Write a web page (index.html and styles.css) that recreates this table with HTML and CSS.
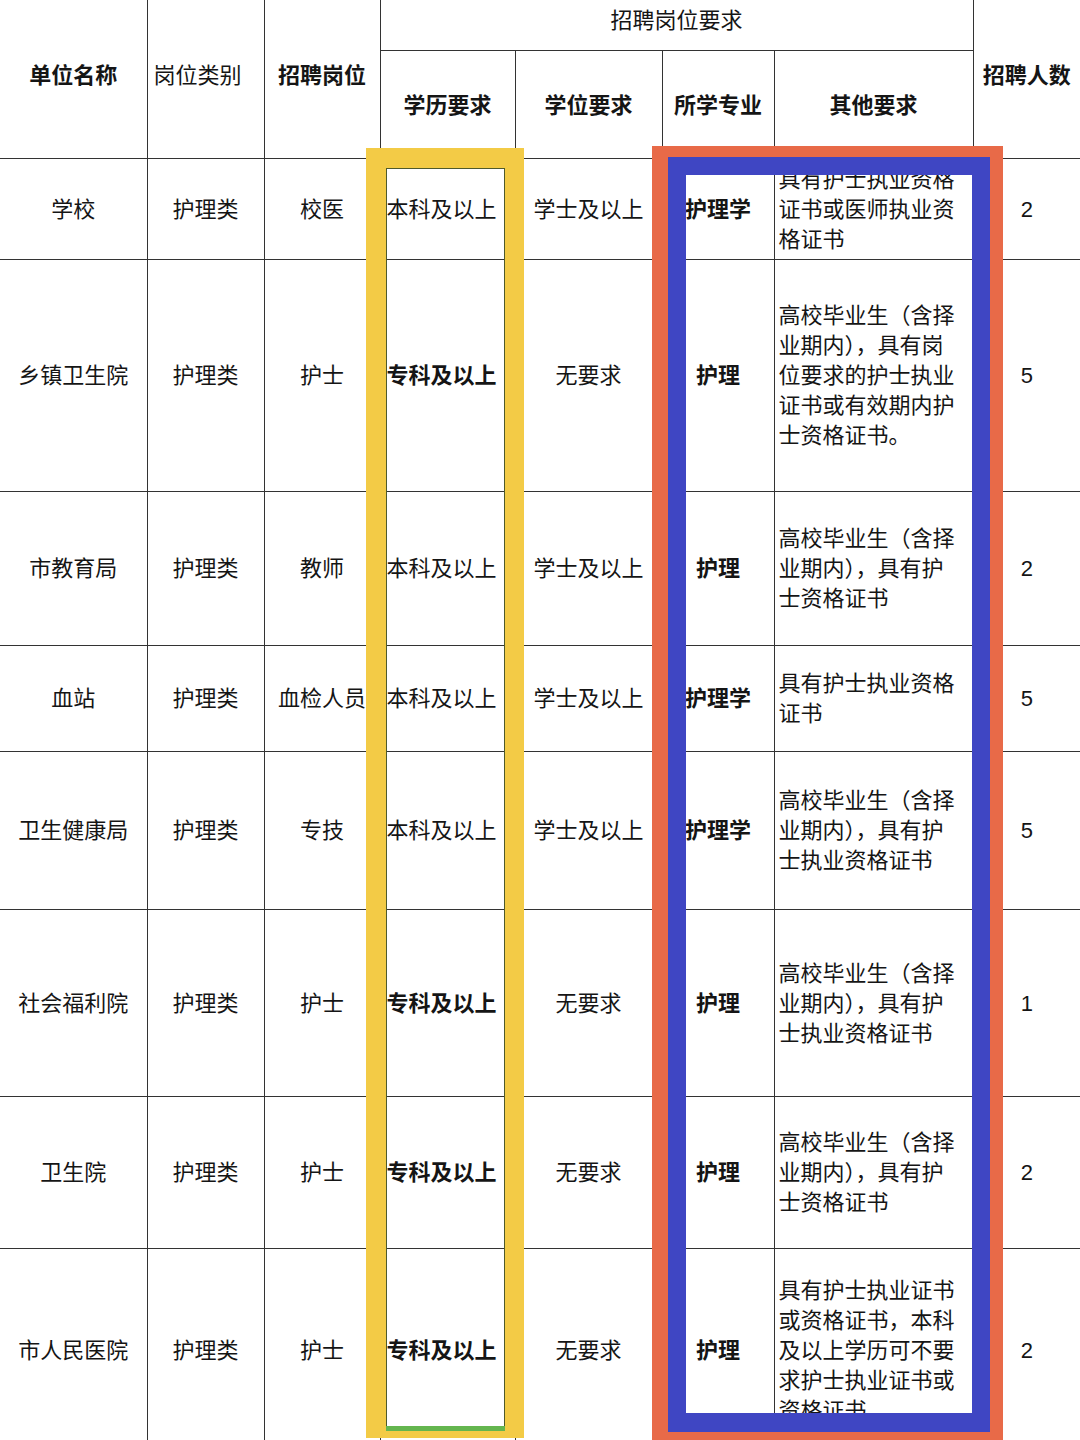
FILE: index.html
```html
<!DOCTYPE html>
<html lang="zh-CN">
<head>
<meta charset="utf-8">
<title>招聘岗位要求</title>
<link rel="stylesheet" href="styles.css">
</head>
<body>
<div class="sheet">
  <table class="grid">
    <colgroup>
      <col class="c1"><col class="c2"><col class="c3"><col class="c4"><col class="c5"><col class="c6"><col class="c7"><col class="c8">
    </colgroup>
    <thead>
      <tr class="h1">
        <th rowspan="2" class="hmain">单位名称</th>
        <th rowspan="2" class="hmain light">岗位类别</th>
        <th rowspan="2" class="hmain">招聘岗位</th>
        <th colspan="4" class="hgroup">招聘岗位要求</th>
        <th rowspan="2" class="hmain">招聘人数</th>
      </tr>
      <tr class="h2">
        <th>学历要求</th>
        <th>学位要求</th>
        <th>所学专业</th>
        <th>其他要求</th>
      </tr>
    </thead>
    <tbody>
      <tr class="r1">
        <td>学校</td><td>护理类</td><td>校医</td>
        <td class="edu">本科及以上</td><td>学士及以上</td><td class="b">护理学</td>
        <td class="other">具有护士执业资格<br>证书或医师执业资<br>格证书</td><td class="num">2</td>
      </tr>
      <tr class="r2">
        <td>乡镇卫生院</td><td>护理类</td><td>护士</td>
        <td class="edu b">专科及以上</td><td>无要求</td><td class="b">护理</td>
        <td class="other">高校毕业生（含择<br>业期内），具有岗<br>位要求的护士执业<br>证书或有效期内护<br>士资格证书。</td><td class="num">5</td>
      </tr>
      <tr class="r3">
        <td>市教育局</td><td>护理类</td><td>教师</td>
        <td class="edu">本科及以上</td><td>学士及以上</td><td class="b">护理</td>
        <td class="other">高校毕业生（含择<br>业期内），具有护<br>士资格证书</td><td class="num">2</td>
      </tr>
      <tr class="r4">
        <td>血站</td><td>护理类</td><td>血检人员</td>
        <td class="edu">本科及以上</td><td>学士及以上</td><td class="b">护理学</td>
        <td class="other">具有护士执业资格<br>证书</td><td class="num">5</td>
      </tr>
      <tr class="r5">
        <td>卫生健康局</td><td>护理类</td><td>专技</td>
        <td class="edu">本科及以上</td><td>学士及以上</td><td class="b">护理学</td>
        <td class="other">高校毕业生（含择<br>业期内），具有护<br>士执业资格证书</td><td class="num">5</td>
      </tr>
      <tr class="r6">
        <td>社会福利院</td><td>护理类</td><td>护士</td>
        <td class="edu b">专科及以上</td><td>无要求</td><td class="b">护理</td>
        <td class="other">高校毕业生（含择<br>业期内），具有护<br>士执业资格证书</td><td class="num">1</td>
      </tr>
      <tr class="r7">
        <td>卫生院</td><td>护理类</td><td>护士</td>
        <td class="edu b">专科及以上</td><td>无要求</td><td class="b">护理</td>
        <td class="other">高校毕业生（含择<br>业期内），具有护<br>士资格证书</td><td class="num">2</td>
      </tr>
      <tr class="r8">
        <td>市人民医院</td><td>护理类</td><td>护士</td>
        <td class="edu b">专科及以上</td><td>无要求</td><td class="b">护理</td>
        <td class="other">具有护士执业证书<br>或资格证书，本科<br>及以上学历可不要<br>求护士执业证书或<br>资格证书</td><td class="num">2</td>
      </tr>
    </tbody>
  </table>
  <div class="mark mark-yellow"></div>
  <div class="mark mark-orange"></div>
  <div class="mark mark-blue"></div>
</div>
</body>
</html>
```

FILE: styles.css
```css
html, body {
  margin: 0;
  padding: 0;
  background: #ffffff;
}

body {
  width: 1080px;
  height: 1440px;
  overflow: hidden;
  font-family: "Noto Sans CJK SC", "Noto Sans", sans-serif;
  color: #151515;
}

.sheet {
  position: relative;
  width: 1080px;
  height: 1440px;
  overflow: hidden;
}

.grid {
  width: 1080px;
  table-layout: fixed;
  border-collapse: collapse;
  font-size: 22px;
  line-height: 30px;
}

.c1 { width: 147px; }
.c2 { width: 117px; }
.c3 { width: 116px; }
.c4 { width: 135px; }
.c5 { width: 147px; }
.c6 { width: 112px; }
.c7 { width: 199px; }
.c8 { width: 107px; }

.grid th,
.grid td {
  padding: 0;
  border: 1.5px solid #333333;
  text-align: center;
  vertical-align: middle;
  white-space: nowrap;
  overflow: visible;
}

.grid td {
  padding-bottom: 4px;
}

/* hide the outer frame which is cropped out of view */
.grid tr > :first-child { border-left: none; }
.grid tr > :last-child { border-right: none; }
.grid thead tr.h1 > * { border-top: none; }
.grid tbody tr:last-child td { border-bottom: none; }

.h1 { height: 50px; }
.h2 { height: 108px; }

.grid th {
  font-weight: 700;
  padding-bottom: 2px;
}

.grid th.hmain {
  padding-bottom: 12px;
}

.grid th.light {
  font-weight: 400;
  padding-right: 16px;
}

.grid th.hgroup {
  font-weight: 400;
  vertical-align: top;
  padding-top: 3px;
  padding-bottom: 0;
}

.r1 { height: 101px; }
.r2 { height: 232px; }
.r3 { height: 154px; }
.r4 { height: 106px; }
.r5 { height: 158px; }
.r6 { height: 187px; }
.r7 { height: 152px; }
.r8 { height: 204px; }

.grid td.edu {
  text-align: left;
  padding-left: 6px;
}

.grid td.b {
  font-weight: 700;
}

.grid td.other {
  text-align: left;
  padding-left: 4px;
}

.grid td.num {
  font-family: "Liberation Sans", "Noto Sans", sans-serif;
  font-size: 22px;
  padding-bottom: 0;
  padding-top: 2px;
}

/* annotation boxes drawn over the table */
.mark {
  position: absolute;
  box-sizing: border-box;
  pointer-events: none;
}

.mark-yellow {
  left: 366px;
  top: 148px;
  width: 158px;
  height: 1290px;
  border-style: solid;
  border-color: #f3cb46;
  border-width: 20px 19px 7px 20px;
  box-shadow: inset 0 -5px 0 #64b64f, inset 0 0 0 1px #4e5a2c;
}

.mark-orange {
  left: 652px;
  top: 146px;
  width: 351px;
  height: 1300px;
  border-style: solid;
  border-color: #e86a48;
  border-width: 11px 13px 14px 16px;
}

.mark-blue {
  left: 668px;
  top: 157px;
  width: 322px;
  height: 1275px;
  border: 18px solid #3f46c3;
  border-bottom-width: 19px;
}
```
